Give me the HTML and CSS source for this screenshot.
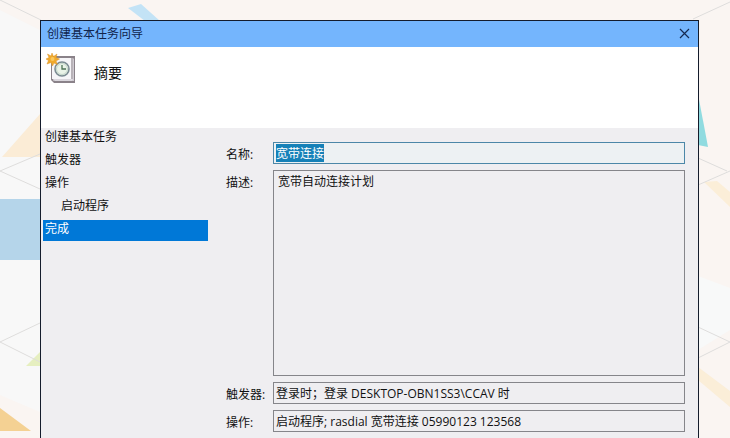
FILE: index.html
```html
<!DOCTYPE html>
<html lang="zh-CN">
<head>
    <meta charset="UTF-8">
    <title>创建基本任务向导</title>
    <link rel="stylesheet" href="styles.css">
</head>
<body>
    <svg class="wallpaper" viewBox="0 0 730 438" preserveAspectRatio="none" aria-hidden="true">
        <rect width="730" height="438" fill="#faf5f2"/>
        <path d="M0 10 40 30V412L0 395z" fill="#f8f8f8"/>
        <path d="M698 276 730 288V330L698 350z" fill="#f8f9f9"/>
        <path d="M128 8 141 4 160 21H145z" fill="#c3e3f6"/>
        <path d="M2 157 40 114V157z" fill="#fbecd6"/>
        <path d="M0 199H40V260H0z" fill="#b5d5ea"/>
        <path d="M26 366 40 352V366z" fill="#e6efc0"/>
        <path d="M0 408 31 431H0z" fill="#f4d193"/>
        <path d="M698 94 708 147 698 145z" fill="#90dbe0"/>
        <path d="M704 182 717 181 730 192V207z" fill="#fbeed8"/>
        <path d="M698 367 730 391V407L698 380z" fill="#fbeed8"/>
        <g fill="none" stroke="#dedddc">
            <path d="M0 0 41 20M40 154 0 171 40 189M40 323 0 342 40 362"/>
            <path d="M693 19 730 2M698 158 727 171M698 185 730 171M698 327 730 342 698 358"/>
        </g>
    </svg>

    <div class="window">
        <div class="title-bar">
            <span>创建基本任务向导</span>
            <button type="button" class="close-button" aria-label="关闭">
                <svg width="11" height="11" viewBox="0 0 11 11"><path d="M1 1 10 10M10 1 1 10" stroke="#152a52" stroke-width="1.2"/></svg>
            </button>
        </div>

        <div class="header">
            <svg class="task-icon" width="32" height="32" viewBox="0 0 32 32" aria-hidden="true">
                <path d="M5 3H29V30H8L5 27z" fill="#8a8289"/>
                <path d="M27 5 28 6V28H9L7 26H27z" fill="#cfcad2"/>
                <path d="M6 5H25V26H6z" fill="#f6f5f8"/>
                <path d="M26 5V27H7" fill="none" stroke="#e6e3e8"/>
                <circle cx="16" cy="16" r="7" fill="#eaf3e8" stroke="#7b8b92" stroke-width="1.6"/>
                <circle cx="16" cy="16" r="5.500" fill="none" stroke="#c3d5c9"/>
                <path d="M16 12V16H20" fill="none" stroke="#4d7355" stroke-width="1.3"/>
                <path d="M6 0 7.500 3.500 11 1 10 4.500 13.500 6 10 8 11.500 11.500 8 10 6.500 13 5 9.500 1 11 2.500 7.500 0 6 3 4.500 1.500 1 5 3z" fill="#f0a92c" stroke="#dc942a" stroke-width=".5"/>
                <circle cx="6.500" cy="6" r="2" fill="#fac75b"/>
            </svg>
            <h1>摘要</h1>
        </div>

        <div class="content">
            <ul class="steps">
                <li>创建基本任务</li>
                <li>触发器</li>
                <li>操作</li>
                <li class="sub">启动程序</li>
                <li class="active">完成</li>
            </ul>

            <form class="summary">
                <label for="name">名称:</label>
                <input id="name" class="name" type="text" value="宽带连接" readonly autofocus>
                <label for="description">描述:</label>
                <textarea id="description" readonly>宽带自动连接计划</textarea>
                <label for="trigger">触发器:</label>
                <input id="trigger" type="text" value="登录时；登录 DESKTOP-OBN1SS3\CCAV 时" readonly>
                <label for="action">操作:</label>
                <input id="action" type="text" value="启动程序; rasdial 宽带连接 05990123 123568" readonly>
            </form>
        </div>
    </div>

<script>
    document.getElementById('name').select();
</script>

</body>
</html>
```

FILE: styles.css
```css
* {
    box-sizing: border-box;
}
body {
    margin: 0;
    padding: 20px 31px 0 40px;
    min-height: 100vh;
    display: flex;
    font-family: "Open Sans", "Noto Sans CJK SC", sans-serif;
    font-size: 12px;
    color: #111111;
}
.wallpaper {
    position: fixed;
    top: 0;
    left: 0;
    width: 100%;
    height: 100%;
    z-index: -1;
}
.window {
    flex: 1;
    background-color: #efeef1;
    border: 1px solid #141c2c;
    border-bottom: none;
}
.title-bar {
    display: flex;
    justify-content: space-between;
    align-items: center;
    height: 26px;
    padding: 0 7px 2px 6px;
    background-color: #74b5fd;
    color: #10244c;
}
.close-button {
    display: flex;
    padding: 1px;
    border: none;
    background: none;
}
.header {
    display: flex;
    align-items: flex-start;
    gap: 16px;
    height: 81px;
    padding: 6px 5px;
    background-color: #ffffff;
}
h1 {
    margin: 8px 0 0;
    font-size: 14px;
    font-weight: normal;
    line-height: 24px;
}
.content {
    display: flex;
}
.steps {
    display: flex;
    flex-direction: column;
    gap: 2px;
    width: 165px;
    margin: 0 18px 0 2px;
    padding: 0;
    list-style: none;
}
.steps li {
    height: 21px;
    padding-left: 2px;
    line-height: 18px;
}
.steps .sub {
    padding-left: 18px;
}
.steps .active {
    background-color: #0078d7;
    color: #ffffff;
}
.summary {
    flex: 1;
    display: grid;
    grid-template-columns: 47px 1fr;
    align-items: start;
    gap: 6px 0;
    padding: 14px 13px 6px 0;
}
label {
    padding-top: 4px;
    line-height: 18px;
    white-space: nowrap;
}
input,
textarea {
    width: 100%;
    height: 22px;
    margin: 0;
    padding: 0 2px;
    border: 1px solid #85858a;
    border-radius: 0;
    outline: none;
    background-color: #efeef1;
    color: #111111;
    font: inherit;
}
textarea {
    display: block;
    height: 206px;
    padding: 2px 4px;
    line-height: 18px;
    resize: none;
}
.name {
    border-color: #4c87a8;
    background-color: #edf1f3;
}
.name::selection {
    background-color: #1681b8;
    color: #ffffff;
}
```
